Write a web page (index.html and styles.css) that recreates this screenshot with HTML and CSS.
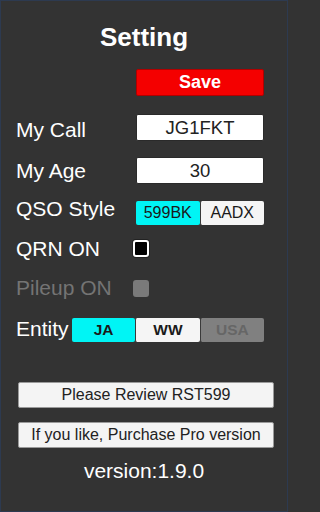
FILE: index.html
```html
<!DOCTYPE html>
<html>
<head>
<meta charset="utf-8">
<link rel="stylesheet" href="styles.css">
</head>
<body>
<div class="page">
  <h1 class="title">Setting</h1>

  <div class="row row-save">
    <div class="label"></div>
    <button class="save">Save</button>
  </div>

  <div class="row row-call">
    <div class="label label-low">My Call</div>
    <div class="input">JG1FKT</div>
  </div>

  <div class="row row-age">
    <div class="label">My Age</div>
    <div class="input">30</div>
  </div>

  <div class="row row-qso">
    <div class="label label-up">QSO Style</div>
    <div class="seg seg-2">
      <span class="opt on">599BK</span>
      <span class="opt">AADX</span>
    </div>
  </div>

  <div class="row row-qrn">
    <div class="label label-low1">QRN ON</div>
    <span class="check"></span>
  </div>

  <div class="row row-pile">
    <div class="label dim">Pileup ON</div>
    <span class="check disabled"></span>
  </div>

  <div class="row row-entity">
    <div class="label label-auto label-up1">Entity</div>
    <div class="seg seg-3 bold">
      <span class="opt on">JA</span>
      <span class="opt">WW</span>
      <span class="opt off">USA</span>
    </div>
  </div>

  <button class="wide review">Please Review RST599</button>
  <button class="wide purchase">If you like, Purchase Pro version</button>

  <div class="version">version:1.9.0</div>
</div>
</body>
</html>
```

FILE: styles.css
```css
* { box-sizing: border-box; }

html {
  background: #333333;
}

html, body {
  margin: 0;
  padding: 0;
  height: 512px;
  overflow: hidden;
}

body {
  font-family: "Liberation Sans", Arial, sans-serif;
  color: #ffffff;
}

.page {
  display: flex;
  flex-direction: column;
  width: 288px;
  height: 512px;
  padding: 22px 0 0 0;
  background: #333333;
  box-shadow: inset 0 0 0 1px #2d3a50;
}

.title {
  margin: 0;
  height: 30px;
  line-height: 30px;
  font-size: 26px;
  font-weight: bold;
  text-align: center;
}

.row {
  display: flex;
  align-items: center;
  padding: 0 24px 0 16px;
}

.label {
  flex: 0 0 120px;
  font-size: 21px;
  line-height: 24px;
  color: #ffffff;
  white-space: nowrap;
}
.label-auto { flex: 0 0 auto; }
.label-low { margin-top: 4px; }
.label-low1 { margin-top: 2px; }
.label-up { margin-bottom: 8px; }
.label-up1 { margin-bottom: 3px; }
.dim { color: #747474; }

.row-save { margin-top: 17px; height: 27px; }
.row-call { margin-top: 18px; height: 27px; }
.row-age { margin-top: 16px; height: 27px; }
.row-qso { margin-top: 17px; height: 24px; }
.row-qrn { margin-top: 14px; height: 18px; }
.row-pile { margin-top: 23px; height: 16px; }
.row-entity { margin-top: 22px; height: 24px; }

.save {
  flex: 0 0 128px;
  height: 27px;
  margin: 0;
  padding: 0;
  border: 1px solid #b00000;
  border-radius: 2px;
  background: #f40000;
  color: #ffffff;
  font-family: "Liberation Sans", Arial, sans-serif;
  font-size: 18px;
  font-weight: bold;
}

.input {
  flex: 0 0 128px;
  height: 27px;
  background: #ffffff;
  border: 1px solid #2a2a2a;
  border-radius: 2px;
  color: #222222;
  font-size: 18.5px;
  line-height: 25px;
  text-align: center;
}

.seg {
  display: flex;
  margin-left: auto;
  height: 24px;
  flex-shrink: 0;
}
.seg-2 { width: 128px; }
.seg-3 { width: 192px; }

.opt {
  flex: 1 1 0;
  background: #f5f5f5;
  color: #1a1a1a;
  font-size: 16px;
  line-height: 24px;
  text-align: center;
  border-left: 1px solid #3a3a3a;
  border-radius: 2px;
}
.opt:first-child { border-left: none; }
.opt.on { background: #00f5f5; }
.opt.off { background: #808080; color: #666666; }
.bold .opt { font-weight: bold; font-size: 15.5px; }

.check {
  display: block;
  flex: 0 0 16px;
  width: 16px;
  height: 17px;
  margin-left: -3px;
  background: #000000;
  border: 2px solid #ffffff;
  border-radius: 3px;
  box-shadow: 0 0 0 1px #222222;
}
.check.disabled {
  background: #7a7a7a;
  border-color: #7a7a7a;
  box-shadow: none;
}

.wide {
  display: block;
  width: 256px;
  height: 26px;
  margin: 0 0 0 18px;
  padding: 0;
  background: #f4f4f4;
  border: 1px solid #9a9a9a;
  border-radius: 2px;
  color: #222222;
  font-family: "Liberation Sans", Arial, sans-serif;
  font-size: 16px;
  line-height: 24px;
  text-align: center;
}
.review { margin-top: 40px; }
.purchase { margin-top: 14px; }

.version {
  margin-top: 11px;
  font-size: 21px;
  line-height: 24px;
  text-align: center;
  color: #ffffff;
}
```
